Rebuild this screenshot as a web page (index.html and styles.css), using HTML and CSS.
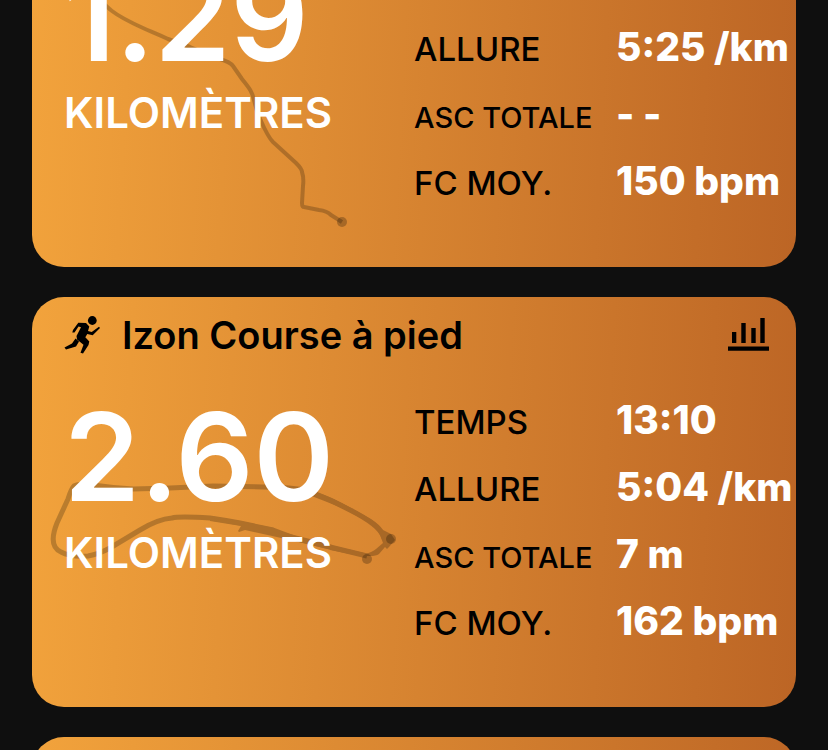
FILE: index.html
```html
<!DOCTYPE html>
<html lang="fr">
<head>
<meta charset="utf-8">
<meta name="viewport" content="width=device-width, initial-scale=1">
<title>Activités</title>
<link rel="stylesheet" href="styles.css">
</head>
<body>
<main class="feed">
  <article class="card card-scrolled">
    <svg class="route" viewBox="0 0 400 321" width="400" height="321" aria-hidden="true">
      <g transform="translate(-32 54)">
        <path class="track" d="M98 -2C104 4 108 8 112 11Q121 18 143 28C152 32 158 34 168 39L190 47C202 52 212 56 220 59Q230 62 233 66L242 79C249 88 252 91 254 100C256 108 257 113 261 121Q268 137 273 142L296 163Q302 169 302 172Q304 178 303 186L302 203Q302 207 304 207L319 210Q327 211 331 215L342 222"/>
        <circle class="spot" cx="342" cy="222" r="5"/>
      </g>
    </svg>
    <div class="body">
      <div class="distance">
        <span class="number">1.29</span>
        <span class="unit">KILOMÈTRES</span>
      </div>
      <dl class="stats">
        <dt>ALLURE</dt><dd>5:25 /km</dd>
        <dt class="long">ASC TOTALE</dt><dd>- -</dd>
        <dt>FC MOY.</dt><dd>150 bpm</dd>
      </dl>
    </div>
  </article>

  <article class="card">
    <svg class="route" viewBox="0 0 400 410" width="400" height="410" aria-hidden="true">
      <g transform="translate(-32 -297)">
        <g class="layer">
          <path class="line" d="M384 538Q382 531 373 524Q364 517 350 510L330 500Q316 494 308 491Q292 487 263 487L213 486L170 488L133 489Q113 488 93 485Q79 483 74 486Q71 489 68 499L57 523C51 538 52 548 61 552Q70 557 88 556Q99 554 110 548L140 530Q158 519 172 518Q179 516 210 518Q224 520 240 523L273 530L297 539L330 547L367 556"/>
          <path class="solid" d="M309 490Q325 494 342 503L371 519Q380 525 383 530L391 534L395 540L389 547L387 549L385 547L379 554Q376 556 370 556L360 556L330 550V545L364 553Q370 554 376 549L383 543L380 535Q377 528 368 522L342 508L327 502L309 495Z"/>
          <path class="solid" d="M210 516L240 521L274 528L278 531L310 539L332 545V550L295 541L245 530L239 532L238 531L241 526L210 521Z"/>
        </g>
        <circle class="spot" cx="391" cy="539" r="5"/>
        <circle class="spot" cx="367" cy="559" r="5"/>
      </g>
    </svg>
    <header class="head">
      <svg class="runner" viewBox="0 0 36 38" width="36" height="38" aria-hidden="true">
        <circle cx="28.300" cy="4.500" r="4.400"/>
        <path d="M14.300 6.700L22 7L25.300 10.500L24 15L27.700 16L35 10.800L36 12L28.700 19.300L23.300 18L21.300 21.300L25.300 25.500L24.500 29L19 37.500L16.500 36.700L19.500 28.700L13 23.500L12.500 20L17 11.300L14.500 10.500L10.500 16.500L8.300 16.500L9 14Z"/>
        <path d="M11.500 22.500L15 25.500L12 30.500L2 33.500L0.500 31.500L8 27.500Z"/>
      </svg>
      <h2 class="title">Izon Course à pied</h2>
      <svg class="chart" viewBox="0 0 42 34" width="42" height="34" aria-hidden="true">
        <path d="M4 14h4.300v11h-4.300zM13.300 5h4.400v20h-4.400zM23.300 10h4.400v15h-4.400zM32.300 0h4.400v25h-4.400zM0 28.500h41v4.300h-41z"/>
      </svg>
    </header>
    <div class="body">
      <div class="distance">
        <span class="number">2.60</span>
        <span class="unit">KILOMÈTRES</span>
      </div>
      <dl class="stats">
        <dt>TEMPS</dt><dd>13:10</dd>
        <dt>ALLURE</dt><dd>5:04 /km</dd>
        <dt class="long">ASC TOTALE</dt><dd>7 m</dd>
        <dt>FC MOY.</dt><dd>162 bpm</dd>
      </dl>
    </div>
  </article>

  <article class="card card-next"></article>
</main>
</body>
</html>
```
FILE: styles.css
```css
* {
  box-sizing: border-box;
}

body {
  margin: 0;
  background: #0f0f0f;
  font-family: Inter, "Liberation Sans", sans-serif;
  color: #000;
}

.feed {
  display: flex;
  flex-direction: column;
  gap: 30px;
  height: 100vh;
  padding: 0 32px;
  overflow: hidden;
}

.card {
  position: relative;
  flex: none;
  padding: 14px 0 53px 32px;
  border-radius: 32px;
  background: linear-gradient(93deg, #f2a33c, #bc6525);
}

/* The feed is scrolled part of the way past its first card. */
.card-scrolled {
  margin-top: -54px;
  padding-top: 0;
}

.card-next {
  min-height: 410px;
}

.route {
  position: absolute;
  top: 0;
  left: 0;
}

.track,
.line {
  fill: none;
  stroke: #000;
  stroke-width: 4px;
  stroke-linejoin: round;
}

.track {
  stroke-opacity: 0.22;
}

.line {
  stroke-width: 5px;
}

.layer {
  opacity: 0.22;
}

.spot {
  fill: #000;
  fill-opacity: 0.24;
}

.head {
  position: relative;
  display: flex;
  align-items: center;
  margin-bottom: 27px;
  padding-right: 26px;
}

.title {
  flex: 1;
  margin: 0 0 0 22px;
  font-size: 38px;
  font-weight: 600;
  line-height: 48px;
}

.body {
  position: relative;
  display: grid;
  grid-template-columns: 350px 1fr;
  min-height: 268px;
}

.distance {
  display: flex;
  flex-direction: column;
  gap: 8px;
  padding-top: 9px;
  color: #fff;
}

.number {
  font-size: 122px;
  font-weight: 600;
  line-height: 124px;
}

.unit {
  font-size: 42px;
  font-weight: 600;
  line-height: 52px;
}

.stats {
  display: grid;
  grid-template-columns: 202px 1fr;
  grid-auto-rows: 67px;
  align-items: baseline;
  align-self: end;
  margin: 0;
  line-height: 67px;
  white-space: nowrap;
}

.stats dt {
  font-size: 33px;
  font-weight: 500;
}

.stats .long {
  font-size: 29px;
}

.stats dd {
  margin: 0;
  color: #fff;
  font-size: 39px;
  font-weight: 800;
}
```
